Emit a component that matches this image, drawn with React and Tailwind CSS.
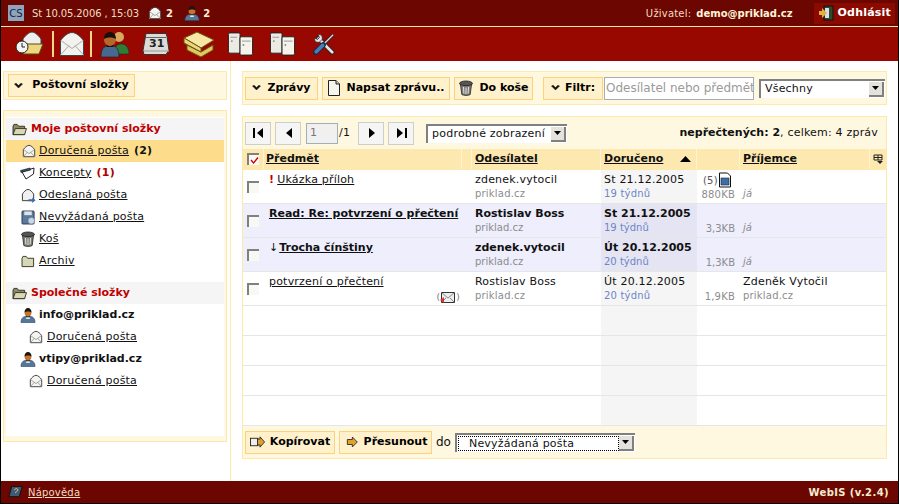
import React from 'react';

// drobné ikony
const Envelope = ({ className = 'w-[14px] h-[14px]' }) => (
  <svg viewBox="0 0 16 16" className={className}>
    <path d="M1.500 6.500C3 4 6 1.500 8 1.500s5 2.500 6.500 5v8h-13z" fill="#f4f4f0" stroke="#333" strokeWidth="1" strokeLinejoin="round" />
    <path d="M1.500 14.500 6.500 9M14.500 14.500 9.500 9M2 6.500l6 4.500 6-4.500" fill="none" stroke="#999" strokeWidth="1" />
  </svg>
);
const BigEnvelope = () => (
  <svg viewBox="0 0 26 26" className="w-[26px] h-[26px]">
    <path d="M1.500 9.500C4 6 9 1.500 13 1.500s9 4.500 11.500 8v15h-23z" fill="#f2f2ee" stroke="#444" strokeWidth="1" strokeLinejoin="round" />
    <path d="M1.500 24 10 14.500M24.500 24 16 14.500M2 9.500l11 8 11-8" fill="none" stroke="#aaa" strokeWidth="1" />
  </svg>
);
const Person = ({ className = 'w-4 h-4' }) => (
  <svg viewBox="0 0 16 16" className={className}>
    <path d="M1 15.500c0-4 2-5.500 4-6h6c2 .5 4 2 4 6z" fill="#54779c" stroke="#2a3f5a" strokeWidth=".6" />
    <path d="M6.500 10h3l.5 2H6z" fill="#dfe6ee" />
    <circle cx="8" cy="6" r="3.400" fill="#c9742c" />
    <path d="M4.500 5.500C4.500 2.500 6 1 8 1s3.500 1.500 3.500 4.500C10 4 6 4 4.500 5.500zM6 8.500c1 1.500 3 1.500 4 0l-.5 1.800h-3z" fill="#1e1410" />
  </svg>
);
const Folder = ({ open }) => (
  <svg viewBox="0 0 16 14" className="w-[15px] h-[13px]">
    <path d="M1 3.500V12.500h12.500V3.500H7L5.500 1.500H2z" fill={open ? '#8b8b6a' : '#d6d6b8'} stroke="#33331f" strokeWidth="1" />
    {open && <path d="M1 12.500 3.500 6h12L13.500 12.500z" fill="#d8d8b4" stroke="#33331f" strokeWidth="1" />}
  </svg>
);
const Trash = ({ className = 'w-[16px] h-[16px]' }) => (
  <svg viewBox="0 0 16 16" className={className}>
    <ellipse cx="8" cy="3.500" rx="6.500" ry="2.500" fill="#555" stroke="#222" strokeWidth=".8" />
    <path d="M2.500 4.500 3.800 14.500c1.500 1.200 6.900 1.200 8.400 0L13.500 4.500c-2 1.500-9 1.500-11 0z" fill="#7d7d76" stroke="#222" strokeWidth=".8" />
    <path d="M5.500 7l.4 6.500M8 7.500v6.500M10.500 7l-.4 6.500" stroke="#eee" strokeWidth=".9" />
  </svg>
);
const Draft = () => (
  <svg viewBox="0 0 16 14" className="w-[16px] h-[14px]">
    <path d="M2 6 14 2 13.500 8 6 13z" fill="#fff" stroke="#222" strokeWidth="1" />
    <path d="M.5 4.500 10 2 10.500 4 1 6.500z" fill="#33506e" stroke="#111" strokeWidth=".6" />
  </svg>
);
const Sent = () => (
  <svg viewBox="0 0 16 16" className="w-[15px] h-[15px]">
    <path d="M1.500 6.500C3 4 5.500 1.500 7.500 1.500s4.500 2.500 6 5v7h-12z" fill="#f0f0f0" stroke="#333" strokeWidth="1" />
    <path d="M8 12h4V10l3.500 3-3.500 3v-2H8z" fill="#3a6ea5" />
  </svg>
);
const Spam = () => (
  <svg viewBox="0 0 16 16" className="w-[15px] h-[15px]">
    <rect x="1" y="1" width="13" height="14" rx="1" fill="#5a7a9e" stroke="#223" strokeWidth=".8" />
    <rect x="3.500" y="1.500" width="8" height="4" fill="#dde3ea" />
    <circle cx="11" cy="11.500" r="3.500" fill="#c8d8e8" stroke="#678" strokeWidth=".6" />
  </svg>
);
const Chevron = () => (
  <svg viewBox="0 0 9 6" className="w-[9px] h-[6px]">
    <path d="M.5 1 4.500 5 8.500 1 7 .2 4.500 2.600 2 .2z" fill="#111" stroke="#111" strokeWidth=".5" />
  </svg>
);
const Server = () => (
  <svg viewBox="0 0 28 26" className="w-[27px] h-[26px]">
    <rect x="1.500" y="1.500" width="12" height="21" rx="1.500" fill="#ecebe3" stroke="#222" />
    <rect x="13.500" y="5.500" width="13" height="19" rx="1.500" fill="#f4f3ec" stroke="#222" />
    <path d="M3.500 6h7M15.500 10h9" stroke="#999" />
    <circle cx="5" cy="10" r="1" fill="#888" />
    <circle cx="17" cy="14" r="1" fill="#888" />
  </svg>
);
const PageIcon = () => (
  <svg viewBox="0 0 14 18" className="w-[14px] h-[18px]">
    <path d="M1.500 1.500h7.500l3.500 3.500v11.500h-11z" fill="#f6f6f0" stroke="#222" />
    <path d="M9 1.500V5h3.500" fill="#ccc" stroke="#222" />
  </svg>
);
const ArrowRight = ({ plus }) => (
  <svg viewBox="0 0 18 14" className="w-[15px] h-[14px]">
    {plus && <rect x=".5" y="2.500" width="9" height="9" fill="#eee" stroke="#111" />}
    <path d={plus ? 'M9 3.500h3V.8L17.500 7 12 13.200V10.500H9z' : 'M4 4h6V1l6 6-6 6v-3H4z'} fill="#e0a030" stroke="#222" />
  </svg>
);

const TopButton = ({ children }) => (
  <div className="h-[23px] shrink-0 flex items-center justify-center gap-[5px] bg-[#fff1cc] border border-[#fdd27a] font-bold tracking-normal text-[11px] text-black whitespace-nowrap">{children}</div>
);

const SelectArrow = () => (
  <div className="w-[15px] h-[15px] bg-[#e4e2dc] border-r-2 border-b-2 border-[#808080] flex items-center justify-center">
    <svg viewBox="0 0 7 4" className="w-[7px] h-[4px]"><path d="M0 0h7L3.500 4z" fill="#000" /></svg>
  </div>
);

const PagerBtn = ({ d }) => (
  <div className="w-[26px] h-[23px] bg-[#f5f5f5] border border-[#cfcfc8] flex items-center justify-center">
    <svg viewBox="0 0 11 10" className="w-[11px] h-[10px]"><path d={d} fill="#000" /></svg>
  </div>
);

const Checkbox = ({ checked }) => (
  <div className="w-[12px] h-[12px] bg-[#f8f8f4] border-l-2 border-t-2 border-[#808080] flex items-center justify-center">
    {checked && <svg viewBox="0 0 9 9" className="w-[9px] h-[9px]"><path d="M1 4l2.500 3L8 1.500" fill="none" stroke="#c00" strokeWidth="1.300" /></svg>}
  </div>
);

const folders = [
  { icon: <Envelope />, name: 'Doručená pošta', count: '(2)', active: true },
  { icon: <Draft />, name: 'Koncepty', count: '(1)', red: true },
  { icon: <Sent />, name: 'Odeslaná pošta' },
  { icon: <Spam />, name: 'Nevyžádaná pošta' },
  { icon: <Trash />, name: 'Koš' },
  { icon: <Folder />, name: 'Archiv' },
];

const messages = [
  { subject: 'Ukázka příloh', mark: '!', sender: 'zdenek.vytocil', date: 'St 21.12.2005', age: '19 týdnů', size: '880KB', to: 'já', attach: true },
  { subject: 'Read: Re: potvrzení o přečtení', sender: 'Rostislav Boss', date: 'St 21.12.2005', age: '19 týdnů', size: '3,3KB', to: 'já', unread: true },
  { subject: 'Trocha čínštiny', mark: '↓', sender: 'zdenek.vytocil', date: 'Út 20.12.2005', age: '20 týdnů', size: '1,3KB', to: 'já', unread: true },
  { subject: 'potvrzení o přečtení', sender: 'Rostislav Boss', date: 'Út 20.12.2005', age: '20 týdnů', size: '1,9KB', toName: 'Zdeněk Vytočil', to: 'priklad.cz', receipt: true },
];

const cols = 'grid grid-cols-[21px_198px_10px_129px_96px_43px_130px_16px]';

const App = () => {
  return (
    <div className="w-[899px] h-[504px] overflow-hidden flex flex-col bg-white border-l border-r border-b border-black text-[11px] tracking-[0.2px] text-[#111] font-['DejaVu_Sans',sans-serif]">
      {/* horní lišta */}
      <div className="h-[26px] shrink-0 bg-[#6b0700] flex items-center text-[#f3dcc0] text-[10px]">
        <div className="ml-[7px] w-[16px] h-[16px] bg-[#8fa5bd] text-[#16233a] flex items-center justify-center text-[10px] tracking-normal">CS</div>
        <span className="ml-[8px] tracking-[-0.1px] whitespace-pre">St 10.05.2006 , 15:03</span>
        <span className="ml-[9px]"><Envelope /></span>
        <b className="ml-[4px] text-[#fff3d8]">2</b>
        <span className="ml-[11px]"><Person /></span>
        <b className="ml-[3px] text-[#fff3d8]">2</b>
        <span className="ml-auto">Uživatel:</span>
        <b className="ml-[5px] text-[#fff3d8] text-[10px] tracking-normal">demo@priklad.cz</b>
        <div className="ml-[21px] mr-[3px] h-[21px] px-[4px] bg-[#8a0a00] flex items-center gap-[4px]">
          <svg viewBox="0 0 16 16" className="w-4 h-4">
            <rect x="6" y="1" width="9" height="14" fill="#2d4a2d" stroke="#111" />
            <path d="M7 3h4v10H7z" fill="#dde" />
            <path d="M1 6h3V3l5 5-5 5v-3H1z" fill="#e0b040" />
          </svg>
          <b className="text-white text-[11px]">Odhlásit</b>
        </div>
      </div>
      <div className="h-px shrink-0 bg-[#f7e7a8]" />
      {/* nástroje */}
      <div className="h-[34px] shrink-0 bg-[#990800] flex items-center">
        <div className="ml-[13px] w-[31px] flex justify-center">
          <svg viewBox="0 0 30 28" className="w-[30px] h-[28px]">
            <path d="M8 9C10 6 14 2 17 2s7 4 9 7v10H8z" fill="#eee" stroke="#444" />
            <path d="M10 14h18l-4 10H8z" fill="#ecd680" stroke="#5a4a10" />
            <circle cx="7" cy="17" r="6" fill="#f3f3f3" stroke="#222" />
            <path d="M7 13v4h3" fill="none" stroke="#222" />
          </svg>
        </div>
        <div className="ml-[7px] w-[40px] h-[26px] border-l-2 border-r-2 border-[#f3d98a] flex justify-center"><BigEnvelope /></div>
        <div className="ml-[8px] w-[30px] flex justify-center">
          <svg viewBox="0 0 30 28" className="w-[30px] h-[28px]">
            <circle cx="19" cy="7" r="5" fill="#d9a860" />
            <path d="M14 24c0-6 3-10 6-10h2c3 0 7 3 7 10z" fill="#2f7d34" stroke="#123" strokeWidth=".5" />
            <path d="M1 27c0-8 3-11 7-11h4c4 0 7 3 7 11z" fill="#47698f" stroke="#123" strokeWidth=".6" />
            <circle cx="10" cy="10" r="6" fill="#b5682a" />
            <path d="M4 9c0-5 3-7 6-7s6 2 6 7c-3-2-9-2-12 0zM6 14c2 3 6 3 8 0l-1 3H7z" fill="#181008" />
          </svg>
        </div>
        <div className="ml-[12px] w-[28px] h-[24px] relative">
          <svg viewBox="0 0 28 24" className="w-[28px] h-[24px]">
            <path d="M4 1.500h20l1 3 2 14-1 1-2 3H2l-1-4z" fill="#dcdcd6" stroke="#333" />
            <path d="M4 5.500h20" stroke="#666" />
            <path d="M2 19h25" stroke="#999" />
          </svg>
          <span className="absolute left-[7px] top-[6px] font-bold text-[11px] tracking-normal leading-[12px] text-[#222]">31</span>
        </div>
        <div className="ml-[13px] w-[32px] flex justify-center">
          <svg viewBox="0 0 32 26" className="w-[32px] h-[26px]">
            <path d="M4 14 18 21l12-7v5L18 26 4 19z" fill="#e2c860" stroke="#6a5414" />
            <path d="M1 7 14 1l17 8-13 8z" fill="#f7e6a4" stroke="#6a5414" />
            <path d="M1 7v5l17 9v-4z" fill="#ecd67c" stroke="#6a5414" />
          </svg>
        </div>
        <div className="ml-[12px]"><Server /></div>
        <div className="ml-[15px]"><Server /></div>
        <div className="ml-[17px]">
          <svg viewBox="0 0 24 24" className="w-[22px] h-[22px]">
            <path d="M6 6 21 21" stroke="#222" strokeWidth="5" strokeLinecap="round" />
            <path d="M6 6 21 21" stroke="#e4e4e4" strokeWidth="3" strokeLinecap="round" />
            <path d="M2 5.500 5 7 7 5 5.500 2C8 1 11 3 10 7L7 10C3 11 1 8 2 5.500z" fill="#e4e4e4" stroke="#222" strokeWidth=".8" />
            <path d="M22 2 10 14" stroke="#222" strokeWidth="3" />
            <path d="M22 2 10 14" stroke="#d8dde4" strokeWidth="1.500" />
            <path d="M11 13 3 21" stroke="#1a2a44" strokeWidth="6" strokeLinecap="round" />
            <path d="M10.500 13.500 3.500 20.500" stroke="#4a7cb8" strokeWidth="4" strokeLinecap="round" />
          </svg>
        </div>
      </div>

      {/* obsah */}
      <div className="flex-1 min-h-0 flex">
        {/* levý panel */}
        <div className="w-[230px] shrink-0 border-r border-[#fde9a8] pt-[10px] pl-[2px] pr-[3px]">
          <div className="h-[29px] bg-[#fff8e0] border border-[#fde9a8] flex items-center pl-[4px]">
            <div className="w-[127px]"><TopButton><Chevron /><span className="ml-[4px]">Poštovní složky</span></TopButton></div>
          </div>
          <div className="mt-[10px] h-[332px] bg-[#fff8e0] border border-[#fde9a8] pt-[6px] px-[2px] pb-[5px]">
            <div className="h-full bg-white pt-px">
              <div className="h-[22px] bg-[#f5f5f5] flex items-center pl-[6px] gap-[4px] font-bold tracking-normal text-[#c00000]"><Folder open />Moje poštovní složky</div>
              {folders.map((f) => (
                <div key={f.name} className={`h-[22px] flex items-center ${f.active ? 'bg-[#fddc8c]' : ''}`}>
                  <span className="w-[33px] flex justify-end pr-[3px]">{f.icon}</span>
                  <span className="underline">{f.name}</span>
                  {f.count && <b className={`ml-[5px] ${f.red ? 'text-[#b00000]' : ''}`}>{f.count}</b>}
                </div>
              ))}
              <div className="mt-[10px] h-[22px] bg-[#f5f5f5] flex items-center pl-[6px] gap-[4px] font-bold tracking-normal text-[#c00000]"><Folder open />Společné složky</div>
              <div className="h-[22px] flex items-center pl-[14px] gap-[3px] font-bold tracking-normal"><Person />info@priklad.cz</div>
              <div className="h-[22px] flex items-center pl-[23px] gap-[4px]"><Envelope /><span className="underline">Doručená pošta</span></div>
              <div className="h-[22px] flex items-center pl-[14px] gap-[3px] font-bold tracking-normal"><Person />vtipy@priklad.cz</div>
              <div className="h-[22px] flex items-center pl-[23px] gap-[4px]"><Envelope /><span className="underline">Doručená pošta</span></div>
            </div>
          </div>
        </div>

        {/* pravý panel */}
        <div className="flex-1 min-w-0 pt-[10px] pl-[11px] pr-[11px]">
          <div className="h-[34px] bg-[#fff8e0] border border-[#fde9a8] flex items-center pl-[2px] gap-[4px]">
            <div className="w-[73px]"><TopButton><Chevron /><span className="ml-[1px]">Zprávy</span></TopButton></div>
            <div className="w-[128px]"><TopButton><PageIcon />Napsat zprávu..</TopButton></div>
            <div className="w-[79px]"><TopButton><Trash />Do koše</TopButton></div>
            <div className="ml-[6px] w-[60px]"><TopButton><Chevron />Filtr:</TopButton></div>
            <div className="-ml-[3px] w-[150px] h-[23px] border border-[#a5adb5] bg-white flex items-center pl-[1px] text-[#9a9a9a] text-[12px] tracking-normal whitespace-nowrap overflow-hidden">Odesílatel nebo předmět</div>
            <div className="ml-[1px] w-[126px] h-[19px] bg-white border-l-2 border-t-2 border-[#808080] flex items-center justify-between pl-[4px] pr-[1px]">
              <span>Všechny</span><SelectArrow />
            </div>
          </div>

          <div className="mt-[11px] h-[343px] bg-[#fff8e0] border border-[#fde9a8] flex flex-col">
            <div className="h-[32px] shrink-0 flex items-center pl-[2px]">
              <PagerBtn d="M0 0h2v10H0zM10 0v10L4 5z" />
              <div className="w-[4px]" />
              <PagerBtn d="M9 0v10L3 5z" />
              <div className="ml-[5px] w-[32px] h-[21px] bg-[#f0f0f0] border border-[#a5adb5] text-[#777] flex items-center pl-[3px]">1</div>
              <span className="ml-[1px]">/1</span>
              <div className="w-[8px]" />
              <PagerBtn d="M3 0v10l6-5z" />
              <div className="w-[4px]" />
              <PagerBtn d="M1 0v10l6-5zM9 0h2v10H9z" />
              <div className="ml-[12px] w-[141px] h-[19px] bg-white border-l-2 border-t-2 border-[#808080] flex items-center justify-between pl-[4px] pr-[1px]">
                <span>podrobné zobrazení</span><SelectArrow />
              </div>
              <div className="ml-auto mr-[8px]"><b className="tracking-normal">nepřečtených: 2</b>, celkem: 4 zpráv</div>
            </div>
            <div className={`${cols} h-[21px] shrink-0 bg-[#fde9b0] font-bold tracking-normal border-b border-[#fde9a8]`}>
              <div className="flex items-center pl-[4px] border-r border-[#fff3d0]"><Checkbox checked /></div>
              <div className="flex items-center pl-[2px] border-r border-[#fff3d0]"><span className="underline">Předmět</span></div>
              <div className="border-r border-[#fff3d0]" />
              <div className="flex items-center pl-[3px] border-r border-[#fff3d0]"><span className="underline">Odesílatel</span></div>
              <div className="flex items-center pl-[3px] justify-between pr-[5px] border-r border-[#fff3d0]">
                <span className="underline">Doručeno</span>
                <svg viewBox="0 0 11 6" className="w-[11px] h-[6px]"><path d="M5.500 0 11 6H0z" fill="#000" /></svg>
              </div>
              <div className="border-r border-[#fff3d0]" />
              <div className="flex items-center pl-[3px] border-r border-[#fff3d0]"><span className="underline">Příjemce</span></div>
              <div className="flex items-center justify-center">
                <svg viewBox="0 0 11 11" className="w-[11px] h-[11px]"><path d="M1 1h8v5H1zM1 3.500h8M5 1v5" fill="none" stroke="#222" /><path d="M4 7h6L7 10z" fill="#222" /></svg>
              </div>
            </div>
            <div className="flex-1 min-h-0 bg-white">
              {messages.map((m) => (
                <div key={m.subject} className={`${cols} h-[34px] border-b border-[#e6e6e6] ${m.unread ? 'bg-[#eeeefc] font-bold tracking-normal' : ''}`}>
                  <div className="flex items-center pl-[4px]"><Checkbox /></div>
                  <div className="relative pl-[5px] pt-[2px]">
                    {m.mark === '!' && <b className="text-[#c00000] mr-[3px]">!</b>}
                    {m.mark === '↓' && <span className="font-normal mr-[1px]">↓</span>}
                    <span className="underline">{m.subject}</span>
                    {m.receipt && <span className="absolute right-[2px] bottom-[1px] flex items-center text-[#777] text-[9px] font-normal leading-none">(<svg viewBox="0 0 16 13" className="w-[16px] h-[13px]"><path d="M1.500 1.500h13v10h-13z" fill="#eee" stroke="#333" /><path d="M2 2l6 5 6-5M2 11l4-4M14 11l-4-4" fill="none" stroke="#888" /><path d="M0 9l4-3v6z" fill="#d33" /></svg>)</span>}
                  </div>
                  <div />
                  <div className="pl-[3px] pt-[3px] leading-[14px]">
                    <div>{m.sender}</div>
                    <div className="font-normal text-[10px] text-[#8c8c8c]">priklad.cz</div>
                  </div>
                  <div className={`pl-[3px] pt-[3px] leading-[14px] ${m.unread ? 'bg-[#e4e4f2]' : 'bg-[#f5f5f5]'}`}>
                    <div>{m.date}</div>
                    <div className="font-normal text-[10px] text-[#6c86c8]">{m.age}</div>
                  </div>
                  <div className="flex flex-col items-end pr-[5px] justify-end pb-[2px] font-normal text-[10px] text-[#8c8c8c] leading-[13px]">
                    {m.attach && (
                      <div className="flex items-center text-[#555] self-start pl-[6px]">(5)
                        <svg viewBox="0 0 14 16" className="w-[14px] h-[16px]"><path d="M1.500 1h8l3 3v11h-11z" fill="#fff" stroke="#111" /><rect x="3" y="6" width="8" height="7" fill="#3c6ea8" stroke="#223" strokeWidth=".6" /></svg>
                      </div>
                    )}
                    <div>{m.size}</div>
                  </div>
                  <div className="pl-[3px] pt-[3px] leading-[14px]">
                    <div className="font-normal h-[14px]">{m.toName}</div>
                    <div className={`font-normal text-[10px] text-[#8c8c8c] ${m.toName ? '' : 'italic'}`}>{m.to}</div>
                  </div>
                  <div />
                </div>
              ))}
              {[0, 1, 2, 3].map((i) => (
                <div key={i} className={`${cols} h-[30px] border-b border-[#e6e6e6]`}>
                  <div /><div /><div /><div />
                  <div className="bg-[#f5f5f5]" />
                  <div /><div /><div />
                </div>
              ))}
            </div>
            <div className="h-[32px] shrink-0 flex items-center pl-[2px]">
              <div className="w-[90px]"><TopButton><ArrowRight plus />Kopírovat</TopButton></div>
              <div className="ml-[4px] w-[93px]"><TopButton><ArrowRight />Přesunout</TopButton></div>
              <span className="ml-[4px] text-[12px] tracking-normal">do</span>
              <div className="ml-[4px] w-[180px] h-[19px] bg-white border-l-2 border-t-2 border-[#808080] flex items-center justify-between pr-[1px]">
                <span className="ml-[1px] pl-[10px] flex-1 border border-dotted border-black h-[15px] leading-[13px]">Nevyžádaná pošta</span><SelectArrow />
              </div>
            </div>
          </div>
        </div>
      </div>

      {/* patička */}
      <div className="h-[22px] shrink-0 bg-[#6b0700] flex items-center text-[#f3dcc0] text-[10px]">
        <svg viewBox="0 0 16 14" className="ml-[7px] w-[15px] h-[14px]">
          <path d="M4 1h11l-3 11H1z" fill="#3f5a78" stroke="#111" />
          <path d="M7 5c0-2 4-2 3.500 0S8 6 8 8" fill="none" stroke="#e8c860" />
        </svg>
        <span className="ml-[5px] underline">Nápověda</span>
        <b className="ml-auto mr-[9px] text-[#f7ead0] text-[10px] tracking-[0.4px]">WebIS (v.2.4)</b>
      </div>
    </div>
  );
};

export default App;
